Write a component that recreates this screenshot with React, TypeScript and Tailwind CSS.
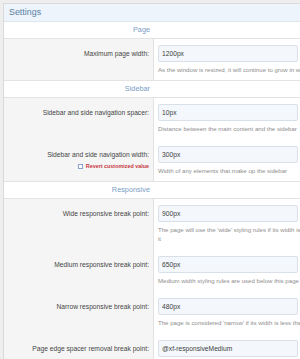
import React from 'react';

type RowData = {
  label: string;
  value: string;
  explain: string[];
  revert?: boolean;
};

type SectionData = {
  title: string;
  rows: RowData[];
};

const sections: SectionData[] = [
  {
    title: 'Page',
    rows: [
      {
        label: 'Maximum page width:',
        value: '1200px',
        explain: ['As the window is resized, it will continue to grow in width up to this value.'],
      },
    ],
  },
  {
    title: 'Sidebar',
    rows: [
      {
        label: 'Sidebar and side navigation spacer:',
        value: '10px',
        explain: ['Distance between the main content and the sidebar'],
      },
      {
        label: 'Sidebar and side navigation width:',
        value: '300px',
        explain: ['Width of any elements that make up the sidebar'],
        revert: true,
      },
    ],
  },
  {
    title: 'Responsive',
    rows: [
      {
        label: 'Wide responsive break point:',
        value: '900px',
        explain: ["The page will use the 'wide' styling rules if its width is above this value. Below this, other rules apply to", 'it'],
      },
      {
        label: 'Medium responsive break point:',
        value: '650px',
        explain: ['Medium width styling rules are used below this page width.'],
      },
      {
        label: 'Narrow responsive break point:',
        value: '480px',
        explain: ["The page is considered 'narrow' if its width is less than this value."],
      },
      {
        label: 'Page edge spacer removal break point:',
        value: '@xf-responsiveMedium',
        explain: ['The edge spacer around the page is removed below this width.'],
      },
    ],
  },
];

const Row: React.FC<{ row: RowData; last: boolean }> = ({ row, last }) => (
  <div className={last ? 'flex border-b border-[#e3e3e3]' : 'flex'}>
    <div className="w-[150px] flex-none border-r border-[#e2e2e2] bg-[#f5f5f5] pr-[4px] pt-[6px] text-right">
      <div className="text-[6.7px] leading-[17px] text-[#454545]">{row.label}</div>
      {row.revert && (
        <div className="flex items-center justify-end gap-[3px] text-[5.4px] font-bold leading-[7px] text-[#c8383f]">
          <span className="h-[5px] w-[5px] border border-[#8da1d1] bg-white" />
          <span>Revert customized value</span>
        </div>
      )}
    </div>
    <div className={last ? 'flex-1 pl-[4px] pt-[6px] pb-[6px]' : 'flex-1 pl-[4px] pt-[6px] pb-[7px]'}>
      <div className="h-[17px] w-[140px] rounded-[2px] border border-[#d9e0e8] bg-[#f4f8fc] pl-[3px] text-[6.7px] leading-[15px] text-[#3d3d3d]">
        {row.value}
      </div>
      <div className="mt-[3px] whitespace-nowrap text-[6.1px] leading-[9px] text-[#8e8e8e]">
        {row.explain.map((line, i) => (
          <div key={i}>{line}</div>
        ))}
      </div>
    </div>
  </div>
);

export default function App() {
  return (
    <div className="h-[359px] w-[300px] overflow-hidden bg-[#eeeeee] pl-[3px] pt-[3px] font-['Liberation_Sans',Arial,sans-serif]">
      <div className="w-[420px] border-l border-t border-[#dadada] bg-white">
        <div className="h-[18px] border-b border-[#dde6ef] bg-[#edf4fb] pl-[5px] text-[8.9px] leading-[17px] text-[#5b7fa6]">
          Settings
        </div>
        {sections.map((section) => (
          <div key={section.title}>
            <div className="flex h-[17px] border-b border-[#e3e3e3]">
              <div className="w-[150px] flex-none pr-[4px] text-right text-[7.3px] leading-[16px] text-[#7a9dc4]">
                {section.title}
              </div>
            </div>
            {section.rows.map((row, i) => (
              <Row key={row.label} row={row} last={i === section.rows.length - 1} />
            ))}
          </div>
        ))}
      </div>
    </div>
  );
}
